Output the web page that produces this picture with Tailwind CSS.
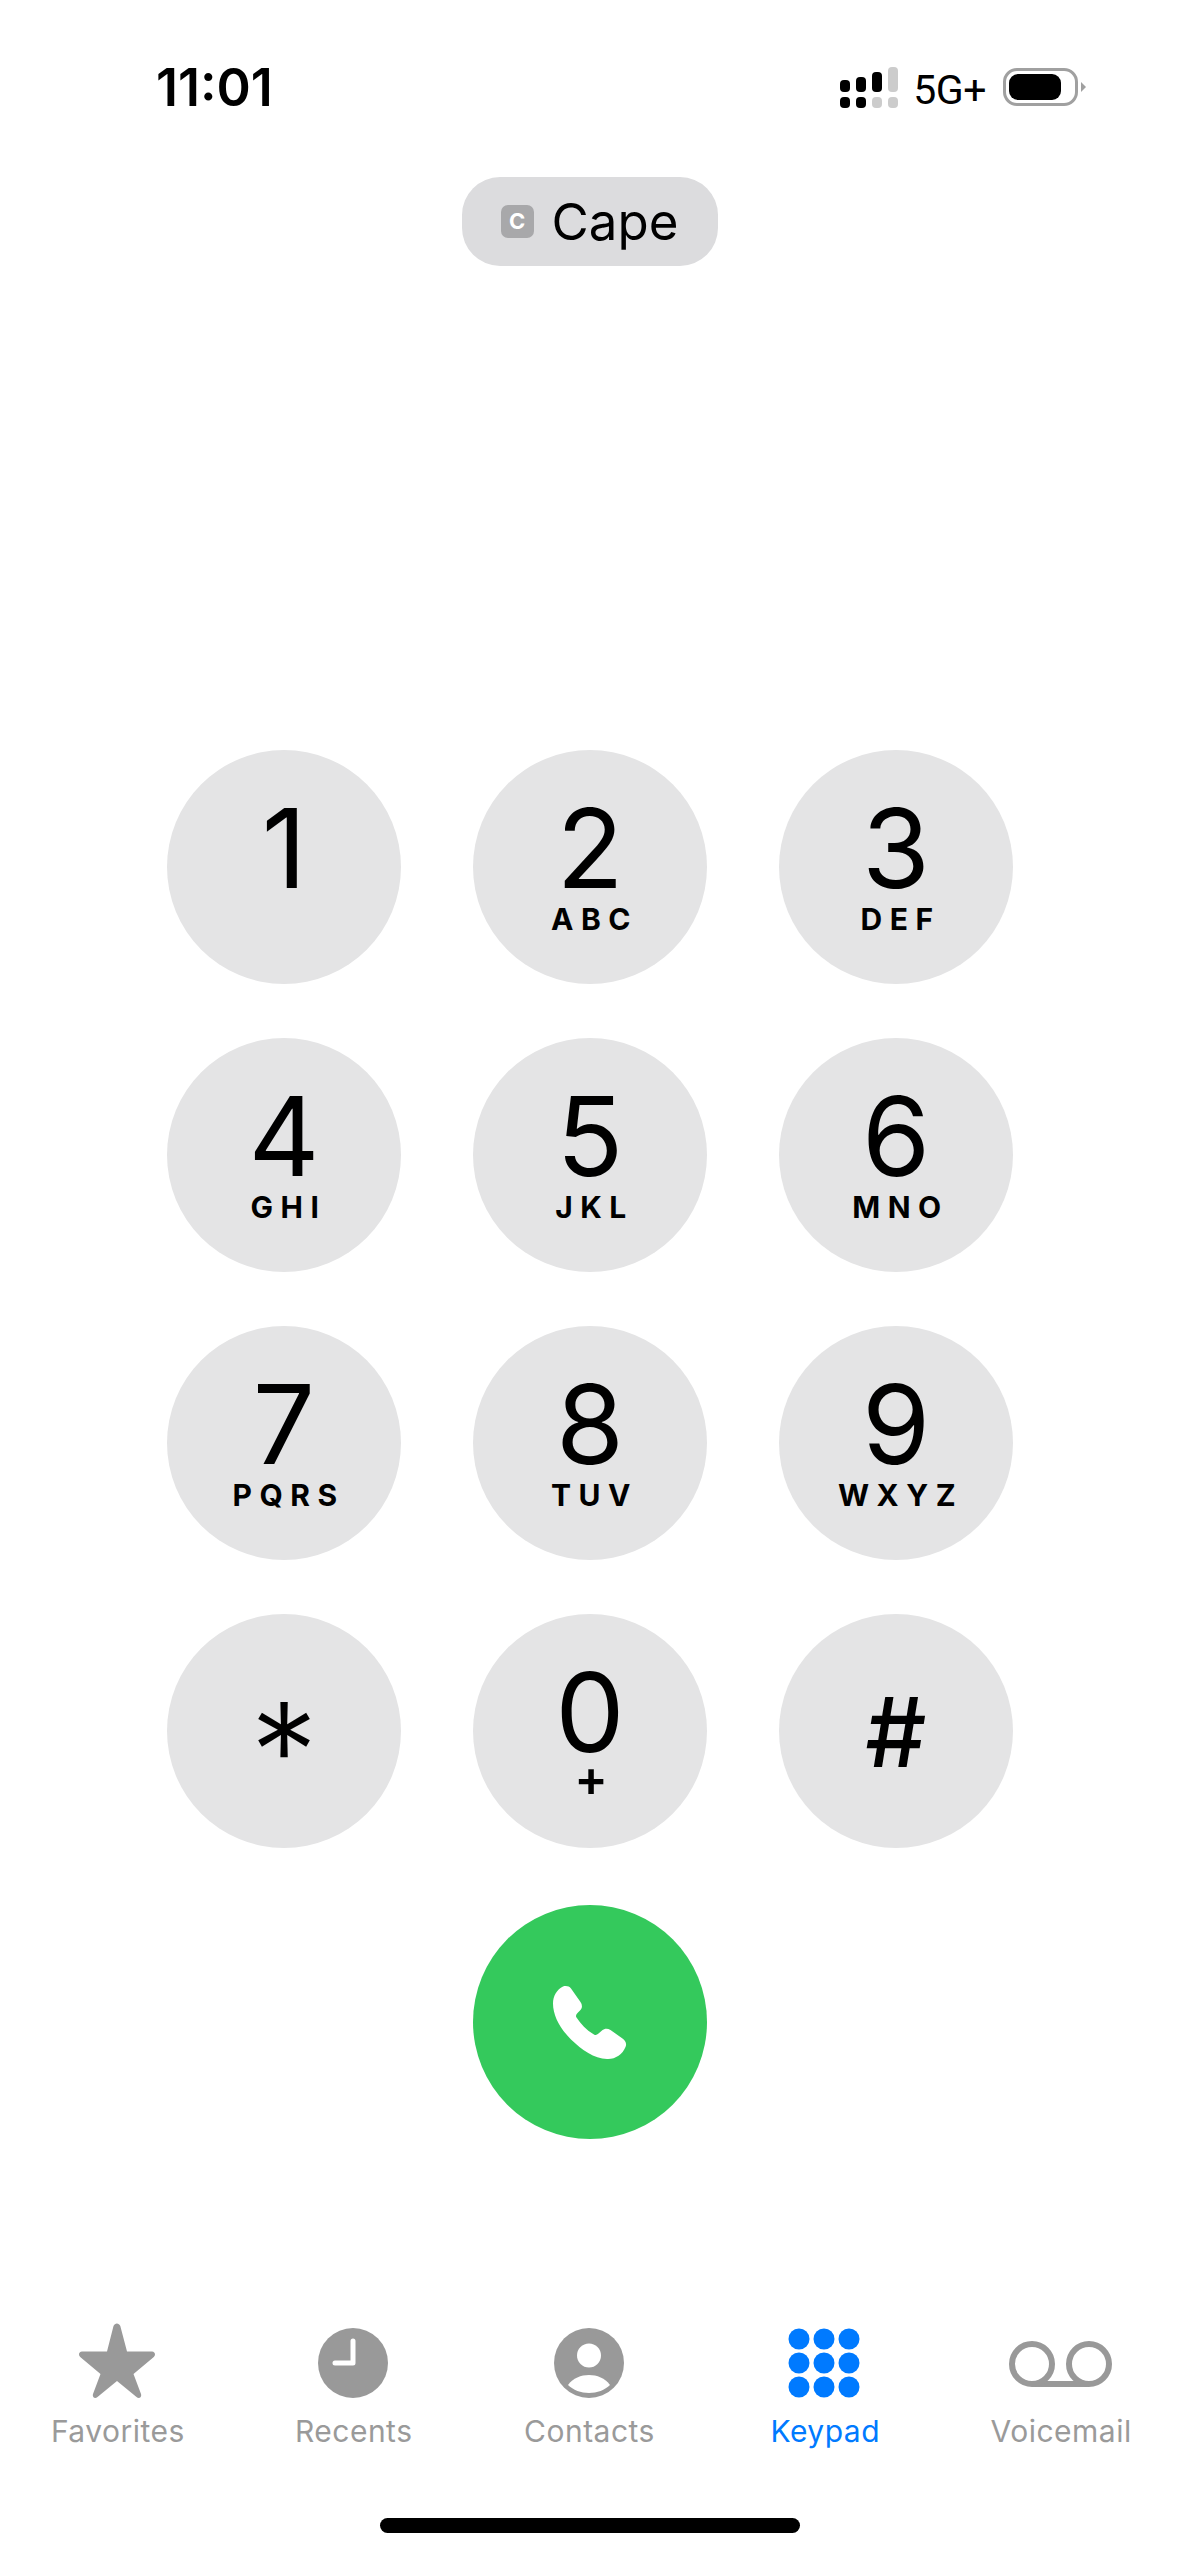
<!DOCTYPE html>
<html lang="en">
  <head>
    <meta charset="UTF-8" />
    <meta name="viewport" content="width=device-width, initial-scale=1.0" />
    <title>Keypad</title>
    <script src="https://cdn.jsdelivr.net/npm/@tailwindcss/browser@4"></script>
  </head>
  <body class="bg-white">
    <div class="w-[1179px] h-[2556px] flex flex-col font-['Inter',sans-serif] text-black overflow-hidden">
      <!-- Status bar -->
      <header class="h-[177px] shrink-0 flex items-start justify-between">
        <span class="ml-[156px] mt-[57px] text-[52px] leading-[62px] font-semibold">11:01</span>
        <div class="mr-[93px] mt-[67px] flex items-start">
          <svg width="58" height="41" viewBox="0 0 58 41" class="mr-[15px]">
            <rect x="0" y="13" width="10" height="12" rx="4" fill="#000" />
            <rect x="16" y="10" width="10" height="15" rx="4" fill="#000" />
            <rect x="32" y="5" width="10" height="20" rx="4" fill="#000" />
            <rect x="48" y="0" width="10" height="25" rx="4" fill="#ccc" />
            <rect x="0" y="30" width="10" height="11" rx="4" fill="#000" />
            <rect x="16" y="30" width="10" height="11" rx="4" fill="#000" />
            <rect x="32" y="30" width="10" height="11" rx="4" fill="#ccc" />
            <rect x="48" y="30" width="10" height="11" rx="4" fill="#ccc" />
          </svg>
          <span class="text-[41px] leading-[46px] mr-[17px] tracking-[-0.5px] font-['Roboto',sans-serif]">5G+</span>
          <div class="mt-px w-[75px] h-[38px] border-[3px] border-[#a0a0a0] rounded-[14px] p-[3px] pr-[14px]">
            <div class="w-full h-full bg-black rounded-[9px]"></div>
          </div>
          <div class="mt-[15px] ml-[3px] w-[5px] h-[10px] bg-[#a0a0a0] [clip-path:polygon(0_0,100%_50%,0_100%)]"></div>
        </div>
      </header>

      <!-- SIM pill -->
      <div class="shrink-0 self-center h-[89px] w-[256px] bg-[#dcdcde] rounded-[38px] flex items-center justify-center gap-[18px]">
        <div class="w-[33px] h-[33px] rounded-[7px] bg-[#a8a8aa] flex items-center justify-center text-white text-[22px] font-bold">C</div>
        <span class="text-[51px] leading-[60px]">Cape</span>
      </div>

      <!-- Keypad -->
      <div class="mt-[484px] shrink-0 self-center ml-[1px] grid grid-cols-[234px_234px_234px] gap-x-[72px] gap-y-[54px]">
        <button class="w-[234px] h-[234px] rounded-full bg-[#e4e4e5] flex flex-col items-center pt-[48px]">
          <span class="text-[110px] leading-[100px]">1</span>
        </button>
        <button class="w-[234px] h-[234px] rounded-full bg-[#e4e4e5] flex flex-col items-center pt-[48px]">
          <span class="text-[110px] leading-[100px]">2</span>
          <span class="mt-[3px] mr-[-9px] text-[30px] leading-[36px] font-bold tracking-[7.5px]">ABC</span>
        </button>
        <button class="w-[234px] h-[234px] rounded-full bg-[#e4e4e5] flex flex-col items-center pt-[48px]">
          <span class="text-[110px] leading-[100px]">3</span>
          <span class="mt-[3px] mr-[-9px] text-[30px] leading-[36px] font-bold tracking-[7.5px]">DEF</span>
        </button>
        <button class="w-[234px] h-[234px] rounded-full bg-[#e4e4e5] flex flex-col items-center pt-[48px]">
          <span class="text-[110px] leading-[100px]">4</span>
          <span class="mt-[3px] mr-[-9px] text-[30px] leading-[36px] font-bold tracking-[7.5px]">GHI</span>
        </button>
        <button class="w-[234px] h-[234px] rounded-full bg-[#e4e4e5] flex flex-col items-center pt-[48px]">
          <span class="text-[110px] leading-[100px]">5</span>
          <span class="mt-[3px] mr-[-9px] text-[30px] leading-[36px] font-bold tracking-[7.5px]">JKL</span>
        </button>
        <button class="w-[234px] h-[234px] rounded-full bg-[#e4e4e5] flex flex-col items-center pt-[48px]">
          <span class="text-[110px] leading-[100px]">6</span>
          <span class="mt-[3px] mr-[-9px] text-[30px] leading-[36px] font-bold tracking-[7.5px]">MNO</span>
        </button>
        <button class="w-[234px] h-[234px] rounded-full bg-[#e4e4e5] flex flex-col items-center pt-[48px]">
          <span class="text-[110px] leading-[100px]">7</span>
          <span class="mt-[3px] mr-[-9px] text-[30px] leading-[36px] font-bold tracking-[7.5px]">PQRS</span>
        </button>
        <button class="w-[234px] h-[234px] rounded-full bg-[#e4e4e5] flex flex-col items-center pt-[48px]">
          <span class="text-[110px] leading-[100px]">8</span>
          <span class="mt-[3px] mr-[-9px] text-[30px] leading-[36px] font-bold tracking-[7.5px]">TUV</span>
        </button>
        <button class="w-[234px] h-[234px] rounded-full bg-[#e4e4e5] flex flex-col items-center pt-[48px]">
          <span class="text-[110px] leading-[100px]">9</span>
          <span class="mt-[3px] mr-[-9px] text-[30px] leading-[36px] font-bold tracking-[7.5px]">WXYZ</span>
        </button>
        <button class="w-[234px] h-[234px] rounded-full bg-[#e4e4e5] flex flex-col items-center pt-[87px]">
          <span class="text-[135px] leading-[100px] font-light">*</span>
        </button>
        <button class="w-[234px] h-[234px] rounded-full bg-[#e4e4e5] flex flex-col items-center pt-[48px]">
          <span class="text-[110px] leading-[100px]">0</span>
          <span class="mt-[-2px] ml-[2px] text-[50px] leading-[36px] font-semibold">+</span>
        </button>
        <button class="w-[234px] h-[234px] rounded-full bg-[#e4e4e5] flex flex-col items-center pt-[68px]">
          <span class="text-[96px] leading-[100px] font-medium">#</span>
        </button>
      </div>

      <!-- Call button -->
      <button class="mt-[57px] shrink-0 self-center ml-[1px] w-[234px] h-[234px] rounded-full bg-[#34c95c] flex items-center justify-center">
        <svg width="74" height="75" viewBox="0 0 74 75">
          <path fill="#fff" d="M10 1.500C13 .5 16 1 18 3.500L27.500 17C29.500 20 29.500 23 27 25.500L24.500 28C23 29.500 22.500 31 23.500 32.500C28 39.500 34 45.500 41 49.500C42.500 50.500 44 50 45.500 48.500L49 45.500C51.500 43.300 54.500 43 57.500 45L69.500 53.500C72.500 55.500 74 59 72.500 62C69.500 69.500 62 74.500 54 74C41 73.500 29 65 18 54.500C7.500 44 0 31 0 18.500C0 11 4 4.500 10 1.500Z" />
        </svg>
      </button>

      <!-- Tab bar -->
      <nav class="mt-[184px] shrink-0 grid grid-cols-5 text-[30px] leading-[36px] text-[#9a9a9a] tracking-[0.5px]">
        <a class="flex flex-col items-center">
          <svg width="76" height="75" viewBox="0 0 76 75" class="ml-[-2px]">
            <path fill="#999" d="M34.500 3C35.800-.5 40-.5 41.300 3L48 28.500H73C76 28.500 77 32 74.800 34L54.500 51L62 71C63 74.500 60 76 57.500 74L38 58L18.500 74C16 76 13 74.500 14 71L21.500 51L1.200 34C-1 32 0 28.500 3 28.500H28Z" />
          </svg>
          <span class="mt-[15px]">Favorites</span>
        </a>
        <a class="flex flex-col items-center">
          <svg width="70" height="75" viewBox="0 0 70 75" class="ml-[-2px]">
            <circle cx="35" cy="40" r="35" fill="#999" />
            <path d="M35 18V40H17" fill="none" stroke="#fff" stroke-width="5" stroke-linecap="round" stroke-linejoin="round" />
          </svg>
          <span class="mt-[15px]">Recents</span>
        </a>
        <a class="flex flex-col items-center">
          <svg width="70" height="75" viewBox="0 0 70 75" class="ml-[-1px]">
            <circle cx="35" cy="40" r="35" fill="#999" />
            <circle cx="35" cy="32.500" r="12" fill="#fff" />
            <path fill="#fff" d="M14 62C19 55 27 52 35 52C43 52 51 55 56 62C51 67 43 70 35 70C27 70 19 67 14 62Z" />
          </svg>
          <span class="mt-[15px]">Contacts</span>
        </a>
        <a class="flex flex-col items-center text-[#007aff]">
          <svg width="72" height="75" viewBox="0 0 72 75" fill="#007aff" class="ml-[-2px]">
            <circle cx="11" cy="16" r="10.500" /><circle cx="36" cy="16" r="10.500" /><circle cx="61" cy="16" r="10.500" />
            <circle cx="11" cy="40" r="10.500" /><circle cx="36" cy="40" r="10.500" /><circle cx="61" cy="40" r="10.500" />
            <circle cx="11" cy="64" r="10.500" /><circle cx="36" cy="64" r="10.500" /><circle cx="61" cy="64" r="10.500" />
          </svg>
          <span class="mt-[15px]">Keypad</span>
        </a>
        <a class="flex flex-col items-center">
          <svg width="103" height="75" viewBox="0 0 103 75" class="ml-[-2px]">
            <path d="M23 61H80" fill="none" stroke="#999" stroke-width="6" />
            <circle cx="23" cy="41" r="20" fill="none" stroke="#999" stroke-width="6" />
            <circle cx="80" cy="41" r="20" fill="none" stroke="#999" stroke-width="6" />
          </svg>
          <span class="mt-[15px]">Voicemail</span>
        </a>
      </nav>

      <!-- Home indicator -->
      <div class="mt-[69px] shrink-0 self-center w-[420px] h-[15px] bg-black rounded-full"></div>
    </div>
  </body>
</html>
